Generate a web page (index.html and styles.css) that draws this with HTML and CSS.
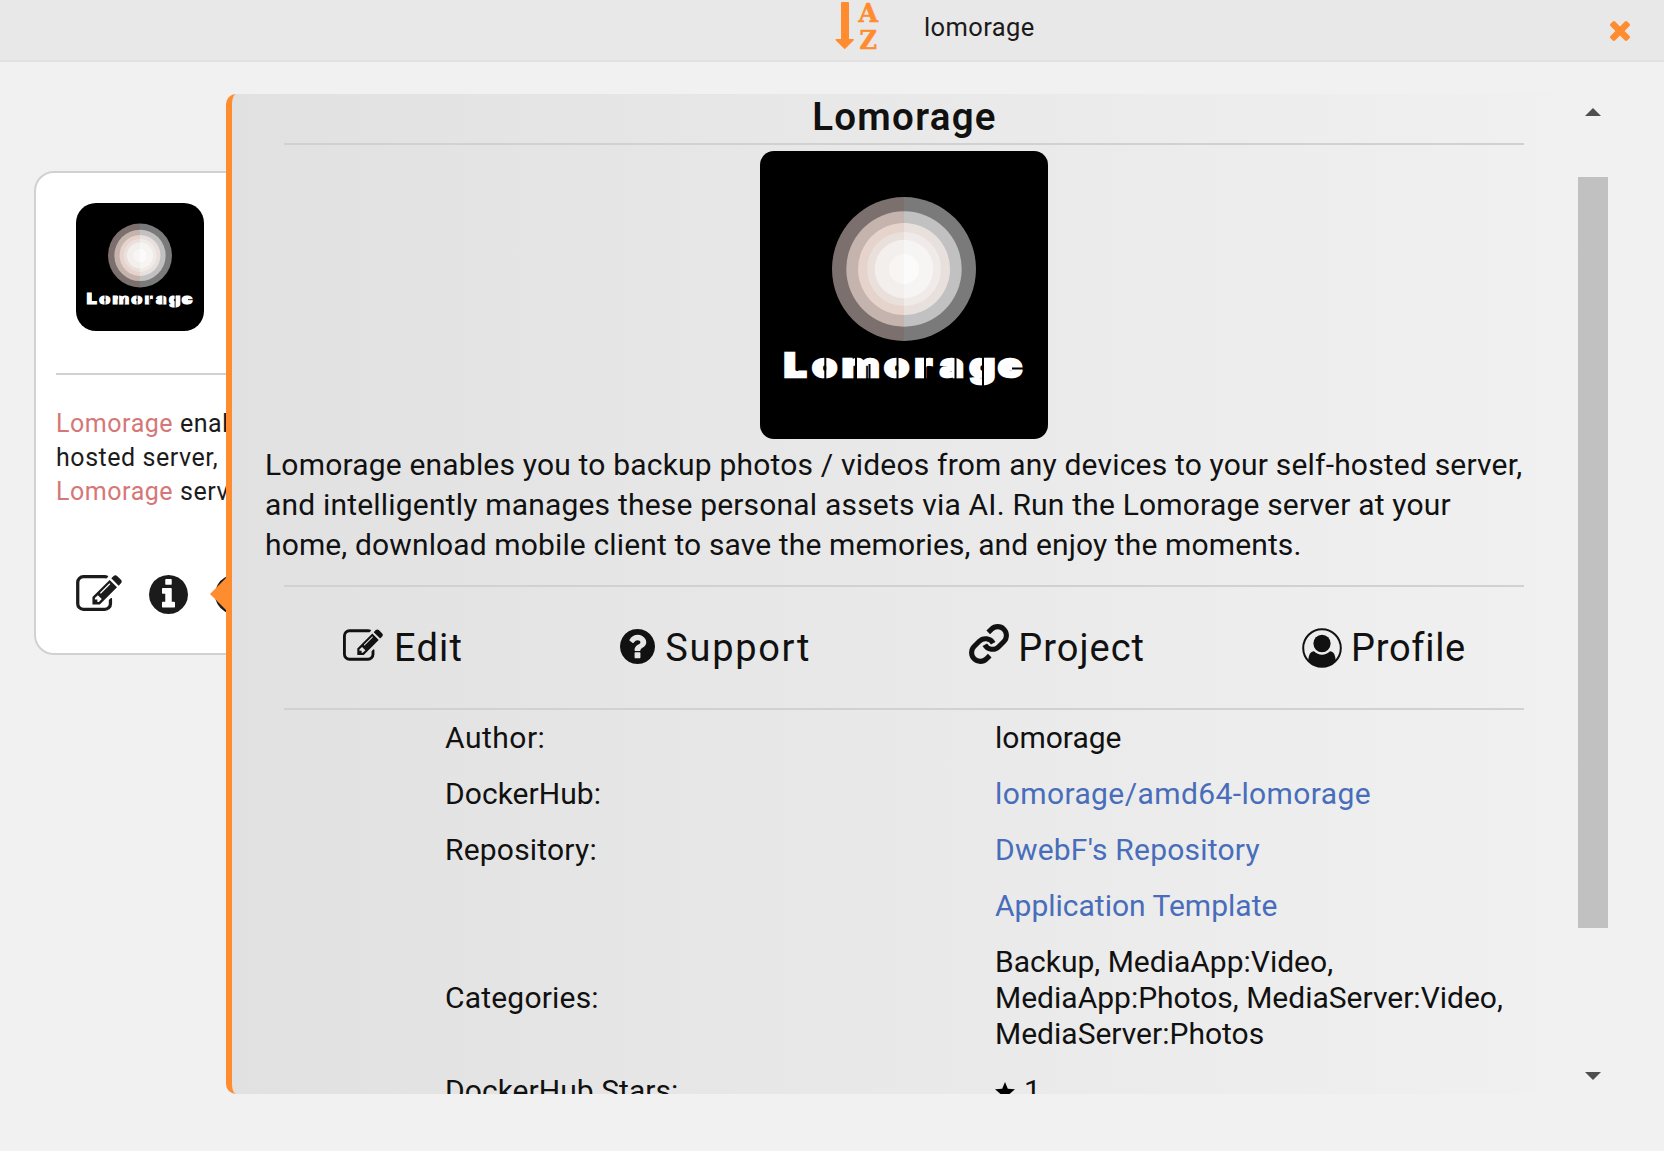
FILE: index.html
```html
<!DOCTYPE html>
<html lang="en">
<head>
<meta charset="utf-8">
<title>Lomorage</title>
<link rel="stylesheet" href="styles.css">
</head>
<body>
<svg class="sprite" aria-hidden="true">
  <symbol id="logo" viewBox="0 0 288 288">
    <rect width="288" height="288" fill="#000"/>
    <circle cx="144" cy="118" r="72" fill="url(#ring1)"/>
    <circle cx="144" cy="118" r="57.7" fill="url(#ring2)"/>
    <circle cx="144" cy="118" r="46" fill="url(#ring3)"/>
    <circle cx="144" cy="118" r="37" fill="url(#ring4)"/>
    <circle cx="144" cy="118" r="29.3" fill="url(#ring5)"/>
    <circle cx="144" cy="118" r="15" fill="url(#ring6)"/>
    <text class="logo-text" transform="scale(1.2 1)" y="226.500" x="20 43.500 68.300 103.500 129 150 174.500 198.300">Lomorage</text>
    <path d="M37.300 200V220M65.300 206V229M96 206V229M109.500 213V229M137.500 206V229M165 206V229M195.500 206V229M223 206V238M252 217.500H266" stroke="#000" stroke-width="2" fill="none"/>
  </symbol>
  <defs>
    <linearGradient id="ring1"><stop offset=".5" stop-color="#7b706d"/><stop offset=".5" stop-color="#7a7a7a"/></linearGradient>
    <linearGradient id="ring2"><stop offset=".5" stop-color="#c4b4ad"/><stop offset=".5" stop-color="#c1c1c1"/></linearGradient>
    <linearGradient id="ring3"><stop offset=".5" stop-color="#e6d3cb"/><stop offset=".5" stop-color="#e8e0dd"/></linearGradient>
    <linearGradient id="ring4"><stop offset=".5" stop-color="#e9dfdb"/><stop offset=".5" stop-color="#f0eae8"/></linearGradient>
    <linearGradient id="ring5"><stop offset=".5" stop-color="#f3efed"/><stop offset=".5" stop-color="#f6f5f4"/></linearGradient>
    <linearGradient id="ring6"><stop offset=".5" stop-color="#f7f6f5"/><stop offset=".5" stop-color="#fbfbfb"/></linearGradient>
  </defs>
  <symbol id="edit" viewBox="0 128 1792 1408"><path d="M888 1184l116-116-152-152-116 116v56h96v96h56zm440-720q-16-16-33 1l-350 350q-17 17-1 33t33-1l350-350q17-17 1-33zm80 594v190q0 119-84.5 203.5t-203.5 84.5h-832q-119 0-203.5-84.5t-84.5-203.5v-832q0-119 84.5-203.5t203.5-84.5h832q63 0 117 25 15 7 18 23 3 17-9 29l-49 49q-14 14-32 8-23-6-45-6h-832q-66 0-113 47t-47 113v832q0 66 47 113t113 47h832q66 0 113-47t47-113v-126q0-13 9-22l64-64q15-15 35-7t20 29zm-96-738l288 288-672 672h-288v-288zm444 132l-92 92-288-288 92-92q28-28 68-28t68 28l152 152q28 28 28 68t-28 68z"/></symbol>
  <symbol id="info" viewBox="128 128 1536 1536"><path d="M1152 1376v-160q0-14-9-23t-23-9h-96v-512q0-14-9-23t-23-9h-320q-14 0-23 9t-9 23v160q0 14 9 23t23 9h96v320h-96q-14 0-23 9t-9 23v160q0 14 9 23t23 9h448q14 0 23-9t9-23zm-128-896v-160q0-14-9-23t-23-9h-192q-14 0-23 9t-9 23v160q0 14 9 23t23 9h192q14 0 23-9t9-23zm640 416q0 209-103 385.5t-279.5 279.5-385.5 103-385.5-103-279.5-279.5-103-385.5 103-385.5 279.5-279.5 385.5-103 385.5 103 279.5 279.5 103 385.5z"/></symbol>
  <symbol id="question" viewBox="128 128 1536 1536"><path d="M1024 1376v-192q0-14-9-23t-23-9h-192q-14 0-23 9t-9 23v192q0 14 9 23t23 9h192q14 0 23-9t9-23zm256-672q0-88-55.5-163t-138.5-116-170-41q-243 0-371 213-15 24 8 42l132 100q7 6 19 6 16 0 25-12 53-68 86-92 34-24 86-24 48 0 85.5 26t37.5 59q0 38-20 61t-68 45q-63 28-115.5 86.5t-52.5 125.5v36q0 14 9 23t23 9h192q14 0 23-9t9-23q0-19 21.5-49.5t54.5-49.5q32-18 49-28.5t46-35 44.5-48 28-60.5 12.5-81zm384 192q0 209-103 385.5t-279.5 279.5-385.5 103-385.5-103-279.5-279.5-103-385.5 103-385.5 279.5-279.5 385.5-103 385.5 103 279.5 279.5 103 385.5z"/></symbol>
</svg>

<header class="topbar">
  <svg class="sort" viewBox="0 0 44 50">
    <path d="M6.5 2h6.500q1 0 1 1v36h4q1.500 0 .5 1.500l-8 8q-.8.8-1.600 0l-8-8q-1-1.500.5-1.500h4.600V3q0-1 1-1z"/>
    <text x="23.500" y="22" textLength="19.500" lengthAdjust="spacingAndGlyphs">A</text>
    <text x="24.500" y="48.500" textLength="17.500" lengthAdjust="spacingAndGlyphs">Z</text>
  </svg>
  <span class="search">lomorage</span>
  <svg class="close" viewBox="302 366 1188 1188"><path d="M1490 1322q0 40-28 68l-136 136q-28 28-68 28t-68-28l-294-294-294 294q-28 28-68 28t-68-28l-136-136q-28-28-28-68t28-68l294-294-294-294q-28-28-28-68t28-68l136-136q28-28 68-28t68 28l294 294 294-294q28-28 68-28t68 28l136 136q28 28 28 68t-28 68l-294 294 294 294q28 28 28 68z"/></svg>
</header>

<main class="stage">
  <article class="card">
    <svg class="card-logo"><use href="#logo"/></svg>
    <hr>
    <p><mark>Lomorage</mark> enables you<br>hosted server,<br><mark>Lomorage</mark> server at</p>
    <div class="card-icons">
      <svg class="i-edit"><use href="#edit"/></svg>
      <svg class="i-round"><use href="#info"/></svg>
      <svg class="i-round"><use href="#question"/></svg>
    </div>
  </article>

  <section class="panel">
    <div class="content">
      <h1>Lomorage</h1>
      <hr>
      <svg class="logo"><use href="#logo"/></svg>
      <p class="about">Lomorage enables you to backup photos / videos from any devices to your self-hosted server,<br>and intelligently manages these personal assets via AI. Run the Lomorage server at your<br><span class="last">home, download mobile client to save the memories, and enjoy the moments.</span></p>
      <hr>
      <nav class="actions">
        <a><svg class="a-edit"><use href="#edit"/></svg><span class="l-edit">Edit</span></a>
        <a><svg class="a-help"><use href="#question"/></svg><span class="l-support">Support</span></a>
        <a><svg class="a-link" viewBox="0 0 24 24"><path d="M9.600 12.400a5 5 0 0 0 7.940 1.140l3-3a5 5 0 0 0-7.070-7.070l-1.900 1.900"/><path d="M14.400 11.600a5 5 0 0 0-7.940-1.140l-3 3a5 5 0 0 0 7.070 7.070l1.900-1.900"/></svg><span class="l-project">Project</span></a>
        <a><svg class="a-user" viewBox="0 0 40 40"><circle cx="20" cy="20" r="18.800" fill="none" stroke="#111" stroke-width="2"/><ellipse cx="20" cy="15.500" rx="8.600" ry="8.700"/><path d="M6.300 33C6.500 27 8.500 23.300 12 23.300c2.300 2.300 5 3.400 8 3.400s5.700-1.100 8-3.400c3.500 0 5.500 3.700 5.700 9.700a19 19 0 0 1-27.400 0z"/></svg><span class="l-profile">Profile</span></a>
      </nav>
      <hr>
      <dl>
        <dt class="author">Author:</dt><dd>lomorage</dd>
        <dt class="hub">DockerHub:</dt><dd><a class="wide">lomorage/amd64-lomorage</a></dd>
        <dt>Repository:</dt><dd><a class="repo">DwebF's Repository</a></dd>
        <dt></dt><dd><a>Application Template</a></dd>
        <dt>Categories:</dt><dd>Backup, MediaApp:Video,<br>MediaApp:Photos, MediaServer:Video,<br>MediaServer:Photos</dd>
        <dt class="hub">DockerHub Stars:</dt><dd class="stars"><svg viewBox="0 0 20 19"><path d="M10 0l2.800 6.700 7.200.6-5.500 4.700 1.700 7-6.200-3.700L3.800 19l1.700-7L0 7.300l7.200-.6z"/></svg>1</dd>
      </dl>
    </div>
    <div class="scrollbar">
      <i class="up"></i>
      <i class="thumb"></i>
      <i class="down"></i>
    </div>
  </section>
  <i class="pointer"></i>
</main>
</body>
</html>
```
FILE: styles.css
```css
* { box-sizing: border-box; }
body {
  margin: 0;
  height: 1151px;
  overflow: hidden;
  background: #f1f1f1;
  color: #1c1b1b;
  font-family: Roboto, "Noto Sans", sans-serif;
  font-weight: 400;
  display: flex;
  flex-direction: column;
}
.sprite { position: absolute; width: 0; height: 0; }
svg { display: block; flex: none; }
hr { border: 0; height: 2px; background: #d1d1d1; margin: 0; }

.logo-text {
  font: 900 33px Inter, Roboto, sans-serif;
  fill: #fff;
  stroke: #fff;
  stroke-width: 2.6;
}

.topbar {
  height: 62px;
  flex: none;
  display: flex;
  background: #e8e8e8;
  border-bottom: 2px solid #e1e1e1;
  padding: 0 34px 0 835px;
}
.sort { width: 44px; height: 50px; fill: #ff8c2f; }
.sort text { font: bold 26.5px "DejaVu Serif", serif; stroke: #ff8c2f; stroke-width: .6; }
.search { margin-left: 45px; font-size: 25.5px; line-height: 54px; letter-spacing: .38px; }
.close { width: 20px; height: 20px; margin: 21px 0 0 auto; fill: #ff8c2f; }

.stage { position: relative; flex: 1; padding: 109px 0 0 34px; }

.card {
  width: 400px;
  height: 484px;
  padding: 30px 20px 0;
  background: #fff;
  border: 2px solid #d1d1d1;
  border-radius: 20px;
}
.card-logo { width: 128px; height: 128px; margin: 0 0 42px 20px; border-radius: 20px; }
.card p { margin: 32px 0 0; font-size: 25px; line-height: 34px; letter-spacing: .55px; }
.card mark { background: none; color: #d67777; }
.card-icons { display: flex; align-items: center; margin: 66px 0 0 20px; fill: #1c1b1b; }
.i-edit { width: 46px; height: 36px; margin-bottom: 3px; }
.i-round { width: 39px; height: 39px; margin-left: 27px; }

.panel {
  position: absolute;
  left: 226px;
  top: 32px;
  width: 1383px;
  height: 1000px;
  display: flex;
  overflow: hidden;
  border-left: 6px solid #ff8c2f;
  border-radius: 10px;
  background: linear-gradient(90deg, #e1e1e1, #f1f1f1);
  color: #111;
}
.pointer {
  position: absolute;
  left: 210px;
  top: 514px;
  width: 18px;
  height: 36px;
  background: #ff8c2f;
  clip-path: polygon(0 50%, 100% 0, 100% 100%);
}

.content { width: 1346px; padding: 0 54px 0 33px; }
.content hr { margin-left: 19px; }
h1 {
  margin: 0 0 3px 20px;
  text-align: center;
  font-size: 38.5px;
  font-weight: 640;
  line-height: 46px;
  letter-spacing: 1.3px;
}
.logo { width: 288px; height: 288px; margin: 6px 0 6px 495px; border-radius: 14px; }
.about { margin: 0 0 20px; font-size: 30px; line-height: 40px; letter-spacing: .19px; white-space: nowrap; }
.about .last { letter-spacing: .13px; }

.actions {
  height: 121px;
  padding: 0 58px 0 78px;
  display: flex;
  align-items: center;
  justify-content: space-between;
  font-size: 38px;
  fill: #111;
}
.actions a { display: flex; align-items: center; }
.a-edit { width: 40px; height: 32px; margin: 0 11px 5px 0; }
.a-help { width: 35px; height: 35px; margin: 0 10px 2px 0; }
.a-link { width: 42px; height: 42px; margin: 0 8px 8px 0; fill: none; stroke: #111; stroke-width: 2.9; }
.a-user { width: 40px; height: 40px; margin-right: 9px; }
.l-edit { letter-spacing: 1.2px; }
.l-support { letter-spacing: 1.7px; }
.l-project { letter-spacing: 1px; }
.l-profile { letter-spacing: .7px; }

dl {
  margin: 0 0 0 180px;
  display: grid;
  grid-template-columns: 550px 1fr;
  align-items: center;
  font-size: 30px;
  line-height: 36px;
}
dt, dd { margin: 0; padding: 10px 0; white-space: nowrap; }
dt { letter-spacing: .2px; }
.hub { letter-spacing: .05px; }
.author { letter-spacing: .5px; }
dd a { color: #486dba; }
dd .repo { letter-spacing: .22px; }
dd .wide { letter-spacing: .4px; }
.stars { display: flex; align-items: center; gap: 9px; padding-top: 11px; }
.stars svg { width: 20px; height: 19px; }

.scrollbar {
  width: 30px;
  padding: 14px 0;
  display: flex;
  flex-direction: column;
  align-items: center;
  background: #f1f1f1;
}
.up, .down { width: 16px; height: 8px; background: #4f4f4f; clip-path: polygon(50% 0, 100% 100%, 0 100%); }
.thumb { width: 30px; height: 751px; margin-top: 61px; background: #c1c1c1; }
.down { margin-top: auto; transform: scaleY(-1); }
```
